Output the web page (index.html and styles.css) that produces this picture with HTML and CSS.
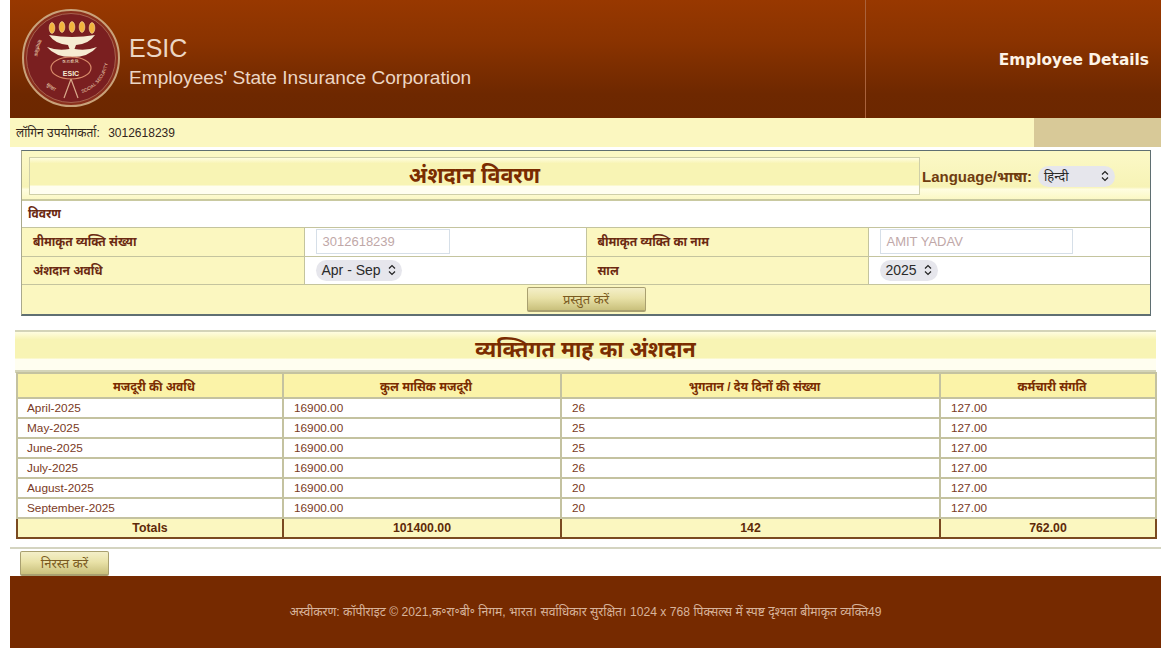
FILE: index.html
```html
<!DOCTYPE html>
<html lang="hi">
<head>
    <meta charset="UTF-8">
    <title>Employee Details</title>
    <link rel="stylesheet" href="styles.css">
</head>
<body>
    <div class="page">
        <div class="top-header">
            <div class="brand">
                <svg class="logo" width="100" height="100" viewBox="0 0 100 100">
                    <defs>
                        <path id="arcLeft" d="M18 31 A37 37 0 0 0 18 68" fill="none"/>
                        <path id="arcBottom" d="M25 77 A37 37 0 0 0 45 87" fill="none"/>
                        <path id="arcRight" d="M61 85 A37 37 0 0 0 87 46" fill="none"/>
                    </defs>
                    <circle cx="50" cy="50" r="48" fill="#8a2f1c" stroke="#c9a27a" stroke-width="2"/>
                    <circle cx="50" cy="50" r="44.5" fill="#7a1f20" stroke="#b0705a" stroke-width="0.8"/>
                    <g fill="#f2b53c" stroke="#f8e3a8" stroke-width="0.6">
                        <ellipse cx="31" cy="20" rx="2.8" ry="5.4"/>
                        <ellipse cx="41" cy="19" rx="2.8" ry="5.4"/>
                        <ellipse cx="51" cy="19" rx="2.8" ry="5.4"/>
                        <ellipse cx="61" cy="19" rx="2.8" ry="5.4"/>
                        <ellipse cx="71" cy="20" rx="2.8" ry="5.4"/>
                    </g>
                    <path d="M28 27 Q51 31 74 27 Q68 36 55 37 L53.5 41 Q66 43 76 39 Q68 49 51 49 Q34 49 26 39 Q36 43 48.5 41 L47 37 Q34 36 28 27Z" fill="#f6ecd2"/>
                    <ellipse cx="50" cy="60" rx="20" ry="11" fill="#7a1f20" stroke="#d88a6a" stroke-width="1.2"/>
                    <path d="M50 71 L43 90 M50 71 L57 90" stroke="#d8a98a" stroke-width="1.2" fill="none"/>
                    <text class="logo-hi" x="50" y="55" text-anchor="middle">क.रा.बी.नि.</text>
                    <text class="logo-esic" x="50" y="67.5" text-anchor="middle">ESIC</text>
                    <text class="logo-ring"><textPath href="#arcLeft">सामाजिक</textPath></text>
                    <text class="logo-ring"><textPath href="#arcBottom">सुरक्षा</textPath></text>
                    <text class="logo-ring logo-ring-en"><textPath href="#arcRight">SOCIAL SECURITY</textPath></text>
                </svg>
                <div class="brand-text">
                    <div class="brand-name">ESIC</div>
                    <div class="brand-full">Employees' State Insurance Corporation</div>
                </div>
            </div>
            <div class="header-right">Employee Details</div>
        </div>

        <div class="login-bar">
            <span class="login-text"><span class="login-label">लॉगिन उपयोगकर्ता:</span> 3012618239</span>
            <span class="login-side"></span>
        </div>

        <div class="form-panel">
            <div class="panel-head">
                <h1 class="panel-title">अंशदान विवरण</h1>
                <div class="lang-box">
                    <span class="lang-label">Language/भाषा:</span>
                    <span class="pill pill-lang">हिन्दी<svg class="updown" width="8" height="12" viewBox="0 0 8 12"><path d="M1 4.5 L4 1.5 L7 4.5 M1 7.5 L4 10.5 L7 7.5" fill="none" stroke="#222" stroke-width="1.2"/></svg></span>
                </div>
            </div>
            <div class="sub-head">विवरण</div>
            <table class="form-table">
                <tr>
                    <td class="lbl">बीमाकृत व्यक्ति संख्या</td>
                    <td class="val"><span class="fake-input">3012618239</span></td>
                    <td class="lbl">बीमाकृत व्यक्ति का नाम</td>
                    <td class="val"><span class="fake-input wide">AMIT YADAV</span></td>
                </tr>
                <tr>
                    <td class="lbl">अंशदान अवधि</td>
                    <td class="val"><span class="pill">Apr - Sep<svg class="updown" width="8" height="12" viewBox="0 0 8 12"><path d="M1 4.5 L4 1.5 L7 4.5 M1 7.5 L4 10.5 L7 7.5" fill="none" stroke="#222" stroke-width="1.2"/></svg></span></td>
                    <td class="lbl">साल</td>
                    <td class="val"><span class="pill">2025<svg class="updown" width="8" height="12" viewBox="0 0 8 12"><path d="M1 4.5 L4 1.5 L7 4.5 M1 7.5 L4 10.5 L7 7.5" fill="none" stroke="#222" stroke-width="1.2"/></svg></span></td>
                </tr>
            </table>
            <div class="submit-row"><button class="btn btn-submit">प्रस्तुत करें</button></div>
        </div>

        <div class="month-section">
            <h2 class="month-title">व्यक्तिगत माह का अंशदान</h2>
            <table class="month-table">
                <colgroup>
                    <col class="c1"><col class="c2"><col class="c3"><col class="c4">
                </colgroup>
                <thead>
                    <tr>
                        <th>मजदूरी की अवधि</th>
                        <th>कुल मासिक मजदूरी</th>
                        <th>भुगतान / देय दिनों की संख्या</th>
                        <th>कर्मचारी संगति</th>
                    </tr>
                </thead>
                <tbody>
                    <tr><td>April-2025</td><td>16900.00</td><td>26</td><td>127.00</td></tr>
                    <tr><td>May-2025</td><td>16900.00</td><td>25</td><td>127.00</td></tr>
                    <tr><td>June-2025</td><td>16900.00</td><td>25</td><td>127.00</td></tr>
                    <tr><td>July-2025</td><td>16900.00</td><td>26</td><td>127.00</td></tr>
                    <tr><td>August-2025</td><td>16900.00</td><td>20</td><td>127.00</td></tr>
                    <tr><td>September-2025</td><td>16900.00</td><td>20</td><td>127.00</td></tr>
                </tbody>
                <tfoot>
                    <tr><td>Totals</td><td>101400.00</td><td>142</td><td>762.00</td></tr>
                </tfoot>
            </table>
        </div>

        <div class="cancel-row"><button class="btn btn-cancel">निरस्त करें</button></div>

        <div class="footer">अस्वीकरण: कॉपीराइट © 2021,क॰रा॰बी॰ निगम, भारत। सर्वाधिकार सुरक्षित। 1024 x 768 पिक्सल्स में स्पष्ट दृश्यता बीमाकृत व्यक्ति49</div>
    </div>
</body>
</html>
```

FILE: styles.css
```css
* {
    margin: 0;
    padding: 0;
    box-sizing: border-box;
}

body {
    background: #fff;
    font-family: "Liberation Sans", "Noto Sans", sans-serif;
    font-size: 13px;
    color: #6b2a12;
}

.page {
    width: 1151px;
    margin-left: 10px;
}

/* header */
.top-header {
    display: flex;
    height: 118px;
    background: linear-gradient(180deg, #983800 0%, #8a3300 35%, #6e2800 80%, #6c2700 100%);
}

.brand {
    width: 856px;
    display: flex;
    align-items: center;
    padding: 6px 0 0 11px;
    border-right: 1px solid #a9623c;
    flex-shrink: 0;
}

.logo {
    flex-shrink: 0;
    margin-top: -9px;
}

.logo-hi {
    font-size: 4px;
    fill: #f6ecd2;
}

.logo-esic {
    font-size: 7px;
    font-weight: bold;
    fill: #f6ecd2;
}

.logo-ring {
    font-size: 5px;
    fill: #ecd3b0;
}

.logo-ring-en {
    font-size: 4.6px;
}

.brand-text {
    margin-left: 8px;
    color: #ecd6c4;
}

.brand-name {
    font-size: 25px;
    line-height: 30px;
}

.brand-full {
    font-size: 19.1px;
    line-height: 28px;
    margin-top: 1px;
}

.header-right {
    flex: 1;
    padding: 51px 12px 0 0;
    text-align: right;
    font-family: "DejaVu Sans", sans-serif;
    font-size: 15.4px;
    font-weight: bold;
    color: #fdf3e6;
}

/* login bar */
.login-bar {
    display: flex;
    height: 29px;
    background: #fbf7c0;
    color: #33261c;
    font-size: 12px;
    justify-content: space-between;
    align-items: center;
    padding-left: 6px;
}

.login-label {
    margin-right: 5px;
}

.login-side {
    width: 127px;
    height: 100%;
    background: #d8c998;
}

/* top form */
.form-panel {
    width: 1130px;
    margin: 3px 0 0 11px;
    border: 1px solid #5f6f72;
    border-left-color: #a9a98c;
    border-bottom-width: 2px;
    background: #fff;
}

.panel-head {
    display: flex;
    height: 50px;
    background: linear-gradient(180deg, #fbf8c4 0%, #fbf8c4 12%, #f7f3b6 75%, #fffde0 80%, #fbf8c4 100%);
    border-bottom: 2px solid #c9c9a0;
    padding: 6px 6px 0 7px;
}

.panel-title {
    width: 891px;
    height: 38px;
    border: 1px solid #cfcfa8;
    background: linear-gradient(180deg, #fffde0 0%, #f8f4b4 15%, #f8f4b4 75%, #fffef0 78%, #fffef0 100%);
    text-align: center;
    font-size: 21.5px;
    line-height: 36px;
    font-weight: bold;
    color: #7a2c00;
}

.lang-box {
    display: flex;
    align-items: center;
    height: 38px;
    padding-left: 2px;
    gap: 6px;
    font-weight: bold;
    font-size: 15px;
    color: #6f3c10;
}

.pill {
    display: inline-flex;
    align-items: center;
    gap: 7px;
    height: 21px;
    padding: 0 6px;
    background: #e6e6ec;
    border-radius: 11px;
    font-size: 14px;
    font-weight: normal;
    color: #2a2a2a;
}

.pill-lang {
    width: 77px;
    justify-content: space-between;
    font-size: 13px;
}

.sub-head {
    height: 27px;
    line-height: 27px;
    padding-left: 6px;
    font-size: 12px;
    font-weight: bold;
    color: #6b2a12;
    border-bottom: 1px solid #c4c49e;
}

.form-table {
    width: 100%;
    border-collapse: collapse;
    table-layout: fixed;
}

.form-table td {
    height: 28px;
    border: 1px solid #c4c49e;
    border-top: 0;
    padding: 0 11px;
    font-size: 12px;
}

.form-table td:first-child {
    border-left: 0;
}

.form-table td:last-child {
    border-right: 0;
}

.lbl {
    background: #fbf7c0;
    font-weight: bold;
    color: #6b2a12;
}

.val {
    padding-left: 12px;
}

.fake-input {
    display: block;
    width: 134px;
    height: 25px;
    line-height: 23px;
    padding-left: 6px;
    border: 1px solid #d6dfe8;
    font-size: 13px;
    color: #bfa8a8;
}

.fake-input.wide {
    width: 193px;
}

.submit-row {
    height: 29px;
    background: #fbf7c0;
    text-align: center;
    padding-top: 2px;
}

.btn {
    font-family: inherit;
    font-size: 13px;
    color: #7a5a20;
    border: 1px solid #a9a070;
    border-bottom-width: 2px;
    border-radius: 2px;
    background: linear-gradient(180deg, #f4efc8 0%, #e9e2a8 45%, #c9c07c 100%);
}

.btn-submit {
    width: 119px;
    height: 25px;
}

/* monthly table */
.month-section {
    width: 1141px;
    margin: 14px 0 0 5px;
    border-top: 2px solid #d4d4b8;
}

.month-title {
    height: 41px;
    background: linear-gradient(180deg, #fffde0 0%, #f8f4b4 20%, #f8f4b4 68%, #fffef0 72%, #fffef0 100%);
    border-bottom: 3px solid #d4d4b8;
    text-align: center;
    font-size: 21.5px;
    line-height: 36px;
    font-weight: bold;
    color: #7a2c00;
}

.month-table {
    width: 1139px;
    margin: -1px 0 0 1px;
    border-collapse: collapse;
    table-layout: fixed;
}

.c1 { width: 266px; }
.c2 { width: 278px; }
.c3 { width: 379px; }
.c4 { width: 216px; }

.month-table th {
    height: 25px;
    padding: 3px 0 0 8px;
    background: #fbf3a8;
    border: 2px solid #c4c2a0;
    font-size: 12px;
    color: #7a2c00;
}

.month-table tbody td {
    height: 20px;
    padding: 0 11px 0 10px;
    border: 2px solid #c4c2a0;
    font-size: 11.8px;
    color: #7a3a24;
}

.month-table tbody td:first-child {
    padding-left: 9px;
}

.month-table tfoot td {
    height: 20px;
    background: #fbf7c0;
    border: 2px solid #7a4a20;
    text-align: center;
    font-size: 12.3px;
    font-weight: bold;
    color: #5e2a08;
}

/* bottom */
.cancel-row {
    margin-top: 8px;
    height: 29px;
    border-top: 2px solid #d4d4c0;
    padding: 2px 0 0 10px;
}

.btn-cancel {
    width: 89px;
    height: 25px;
}

.footer {
    height: 72px;
    background: #762a00;
    color: #d8b49c;
    font-size: 12.15px;
    line-height: 72px;
    text-align: center;
}
```
